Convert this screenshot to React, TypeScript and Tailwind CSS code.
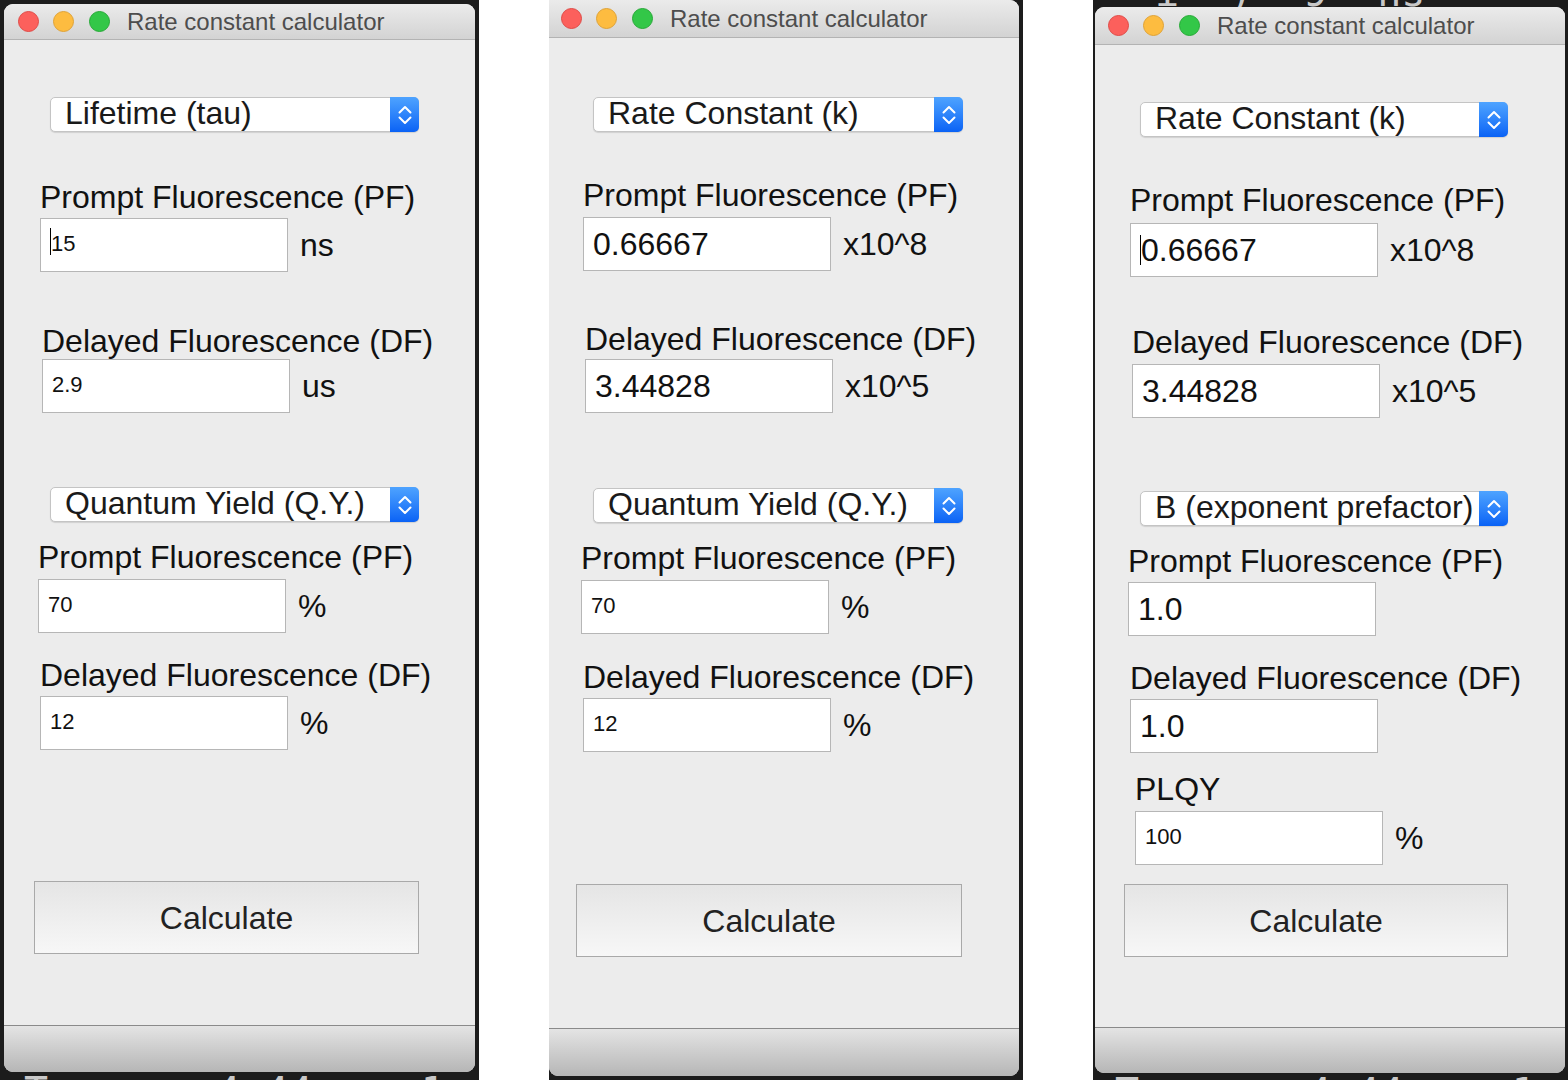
const font = "font-['Liberation_Sans',Arial,sans-serif]";

function TitleBar({ h, redMl }: { h: string; redMl: string }) {
  return (
    <div className={"flex items-center shrink-0 border-b border-[#b3b3b3] bg-gradient-to-b from-[#ebebeb] to-[#d3d3d3] " + h}>
      <span className={"w-[21px] h-[21px] rounded-full bg-[#fc605c] border border-[#df4b47] " + redMl} />
      <span className="ml-[14px] w-[21px] h-[21px] rounded-full bg-[#fdbc40] border border-[#dfa236]" />
      <span className="ml-[15px] w-[21px] h-[21px] rounded-full bg-[#33c748] border border-[#27a937]" />
      <span className="ml-[17px] text-[24px] leading-none text-[#4d4d4d]">Rate constant calculator</span>
    </div>
  );
}

function Select({ label, className }: { label: string; className: string }) {
  return (
    <div className={"flex h-[35px] rounded-[5px] border border-[#c4c4c4] bg-white shadow-[0_1px_1px_rgba(0,0,0,0.12)] " + className}>
      <div className="flex-1 flex items-center pl-[14px] pb-[3px] text-[32px] leading-[29px] text-[#1a1a1a] whitespace-nowrap">{label}</div>
      <div className="w-[29px] shrink-0 -my-px -mr-px rounded-r-[5px] flex items-center justify-center bg-gradient-to-b from-[#4ea3ff] to-[#0a62f5]">
        <svg width="16" height="26" viewBox="0 0 16 26" fill="none" stroke="white" strokeWidth="2" strokeLinecap="round" strokeLinejoin="round">
          <path d="M2.5 10.5 L8 5 L13.5 10.5" />
          <path d="M2.5 15.5 L8 21 L13.5 15.5" />
        </svg>
      </div>
    </div>
  );
}

function Label({ children, className }: { children: React.ReactNode; className: string }) {
  return <div className={"text-[32px] leading-[34px] text-[#111] whitespace-nowrap " + className}>{children}</div>;
}

function Field({ value, unit, big, caret, className }: { value: string; unit?: string; big?: boolean; caret?: boolean; className: string }) {
  return (
    <div className={"flex items-center " + className}>
      <div
        className={
          "w-[248px] h-[54px] shrink-0 bg-white border border-[#b6b6b6] flex pl-[9px] text-[#111] " +
          (big ? "items-center text-[32px] leading-[34px]" : "items-start pt-[14px] text-[22px] leading-[22px]")
        }
      >
        {caret && <span className={"w-px bg-black " + (big ? "h-[30px]" : "h-[27px] -mt-[5px]")} />}
        {value}
      </div>
      {unit && <span className="ml-[12px] text-[32px] leading-[34px] text-[#111]">{unit}</span>}
    </div>
  );
}

function Calc({ className }: { className: string }) {
  return (
    <div className={"h-[73px] border border-[#a9a9a9] bg-gradient-to-b from-[#e5e5e5] to-[#f7f7f7] flex items-center justify-center text-[32px] leading-[34px] text-[#222] " + className}>
      Calculate
    </div>
  );
}

function BottomBar({ h }: { h: string }) {
  return <div className={"shrink-0 border-t border-[#8a8a8a] bg-gradient-to-b from-[#e4e4e4] to-[#b6b6b6] " + h} />;
}

function Behind() {
  // bits of the terminal text behind the windows
  return (
    <div className="flex gap-[60px] pl-[20px] text-[40px] leading-[40px] text-[#c8c8c8] font-['DejaVu_Sans_Mono',monospace] whitespace-nowrap">
      <span>Tr</span>
      <span>=</span>
      <span>4.44</span>
      <span>nm1</span>
    </div>
  );
}

export default function App() {
  return (
    <div className={"flex w-[1568px] h-[1080px] bg-white overflow-hidden " + font}>
      {/* window 1 */}
      <div className="w-[479px] h-[1080px] shrink-0 bg-[#1c1c1c] pl-[4px] pt-[4px] flex flex-col overflow-hidden">
        <div className="w-[471px] h-[1068px] shrink-0 rounded-[9px] overflow-hidden flex flex-col bg-[#ececec]">
          <TitleBar h="h-[36px]" redMl="ml-[14px]" />
          <div className="flex-1 flex flex-col items-start">
            <Select label="Lifetime (tau)" className="mt-[57px] ml-[46px] w-[369px]" />
            <Label className="mt-[48px] ml-[36px]">Prompt Fluorescence (PF)</Label>
            <Field value="15" unit="ns" caret className="mt-[4px] ml-[36px]" />
            <Label className="mt-[52px] ml-[38px]">Delayed Fluorescence (DF)</Label>
            <Field value="2.9" unit="us" className="mt-[1px] ml-[38px]" />
            <Select label="Quantum Yield (Q.Y.)" className="mt-[74px] ml-[46px] w-[369px]" />
            <Label className="mt-[18px] ml-[34px]">Prompt Fluorescence (PF)</Label>
            <Field value="70" unit="%" className="mt-[5px] ml-[34px]" />
            <Label className="mt-[25px] ml-[36px]">Delayed Fluorescence (DF)</Label>
            <Field value="12" unit="%" className="mt-[4px] ml-[36px]" />
            <Calc className="mt-[131px] ml-[30px] w-[385px]" />
          </div>
          <BottomBar h="h-[47px]" />
        </div>
        <Behind />
      </div>

      {/* window 2 */}
      <div className="ml-[70px] w-[474px] h-[1080px] shrink-0 bg-[#1c1c1c] flex flex-col overflow-hidden">
        <div className="w-[470px] h-[1076px] shrink-0 rounded-b-[9px] rounded-tr-[9px] overflow-hidden flex flex-col bg-[#ececec]">
          <TitleBar h="h-[38px]" redMl="ml-[12px]" />
          <div className="flex-1 flex flex-col items-start">
            <Select label="Rate Constant (k)" className="mt-[59px] ml-[44px] w-[370px]" />
            <Label className="mt-[46px] ml-[34px]">Prompt Fluorescence (PF)</Label>
            <Field value="0.66667" unit="x10^8" big className="mt-[5px] ml-[34px]" />
            <Label className="mt-[51px] ml-[36px]">Delayed Fluorescence (DF)</Label>
            <Field value="3.44828" unit="x10^5" big className="mt-[3px] ml-[36px]" />
            <Select label="Quantum Yield (Q.Y.)" className="mt-[75px] ml-[44px] w-[370px]" />
            <Label className="mt-[18px] ml-[32px]">Prompt Fluorescence (PF)</Label>
            <Field value="70" unit="%" className="mt-[5px] ml-[32px]" />
            <Label className="mt-[26px] ml-[34px]">Delayed Fluorescence (DF)</Label>
            <Field value="12" unit="%" className="mt-[4px] ml-[34px]" />
            <Calc className="mt-[132px] ml-[27px] w-[386px]" />
          </div>
          <BottomBar h="h-[48px]" />
        </div>
        <Behind />
      </div>

      {/* window 3 */}
      <div className="ml-[70px] w-[475px] h-[1080px] shrink-0 bg-[#1c1c1c] pl-[2px] flex flex-col overflow-hidden">
        <div className="h-[7px] shrink-0 flex items-end overflow-hidden pl-[60px] gap-[50px] text-[40px] leading-[30px] text-[#c8c8c8] font-['DejaVu_Sans_Mono',monospace]">
          <span>i</span>
          <span>)</span>
          <span>9</span>
          <span>ns</span>
        </div>
        <div className="w-[470px] h-[1066px] shrink-0 rounded-[9px] overflow-hidden flex flex-col bg-[#ececec]">
          <TitleBar h="h-[38px]" redMl="ml-[13px]" />
          <div className="flex-1 flex flex-col items-start">
            <Select label="Rate Constant (k)" className="mt-[57px] ml-[45px] w-[368px]" />
            <Label className="mt-[46px] ml-[35px]">Prompt Fluorescence (PF)</Label>
            <Field value="0.66667" unit="x10^8" big caret className="mt-[6px] ml-[35px]" />
            <Label className="mt-[48px] ml-[37px]">Delayed Fluorescence (DF)</Label>
            <Field value="3.44828" unit="x10^5" big className="mt-[5px] ml-[37px]" />
            <Select label="B (exponent prefactor)" className="mt-[73px] ml-[45px] w-[368px]" />
            <Label className="mt-[18px] ml-[33px]">Prompt Fluorescence (PF)</Label>
            <Field value="1.0" big className="mt-[4px] ml-[33px]" />
            <Label className="mt-[25px] ml-[35px]">Delayed Fluorescence (DF)</Label>
            <Field value="1.0" big className="mt-[4px] ml-[35px]" />
            <Label className="mt-[19px] ml-[40px]">PLQY</Label>
            <Field value="100" unit="%" className="mt-[5px] ml-[40px]" />
            <Calc className="mt-[19px] ml-[29px] w-[384px]" />
          </div>
          <BottomBar h="h-[46px]" />
        </div>
        <Behind />
      </div>
    </div>
  );
}
